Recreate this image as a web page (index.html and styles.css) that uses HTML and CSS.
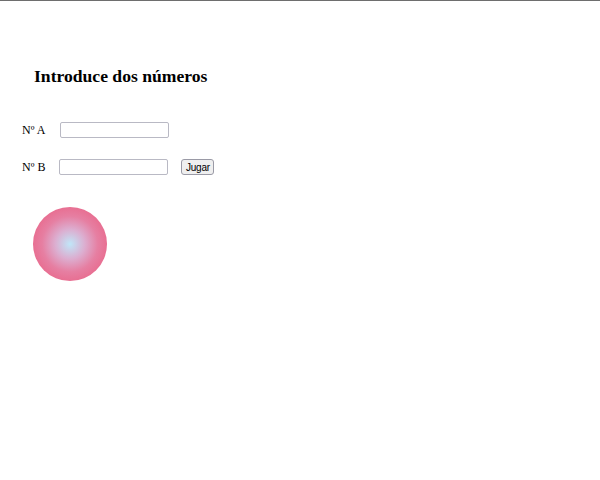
FILE: index.html
```html
<!DOCTYPE html>
<html lang="es">
<head>
<meta charset="utf-8">
<title>Juego</title>
<link rel="stylesheet" href="styles.css">
</head>
<body>
<div class="topbar"></div>
<main class="page">
  <h2 class="title">Introduce dos números</h2>
  <div class="row row-a">
    <label class="lbl" for="a">Nº A</label>
    <input class="num" id="a" type="text">
  </div>
  <div class="row row-b">
    <label class="lbl" for="b">Nº B</label>
    <input class="num" id="b" type="text">
    <button class="btn" type="button">Jugar</button>
  </div>
  <div class="ball"></div>
</main>
</body>
</html>
```
FILE: styles.css
```css
html, body {
  margin: 0;
  padding: 0;
  background: #ffffff;
}
.topbar {
  height: 1px;
  background: #6e6e6e;
}
.page {
  padding-left: 22px;
  font-family: "Liberation Serif", serif;
  color: #000;
}
.title {
  margin: 64px 0 0 12px;
  font-size: 17.6px;
  line-height: 22px;
  font-weight: bold;
}
.row {
  display: flex;
  align-items: center;
  height: 16px;
}
.row-a {
  margin-top: 35px;
}
.row-b {
  margin-top: 21px;
}
.lbl {
  font-size: 12px;
  margin-right: 14.6px;
}
.row-b .lbl {
  margin-right: 14px;
}
.num {
  box-sizing: border-box;
  width: 109px;
  height: 16px;
  margin: 0;
  padding: 0 2px;
  border: 1px solid #b9b9c4;
  border-radius: 2px;
  background: #fff;
  font-size: 11px;
}
.btn {
  box-sizing: border-box;
  margin: 0 0 0 13px;
  height: 16px;
  width: 33px;
  padding: 0;
  border: 1px solid #9a9aa6;
  border-radius: 3px;
  background: #efefef;
  font-family: "Liberation Sans", sans-serif;
  font-size: 10px;
  color: #000;
  letter-spacing: -0.2px;
}
.ball {
  margin: 32px 0 0 11px;
  width: 74px;
  height: 74px;
  border-radius: 50%;
  background: radial-gradient(circle closest-side, #c0e6f8 0%, #dcaed0 40%, #e67fa2 75%, #e86f92 100%);
}
```
